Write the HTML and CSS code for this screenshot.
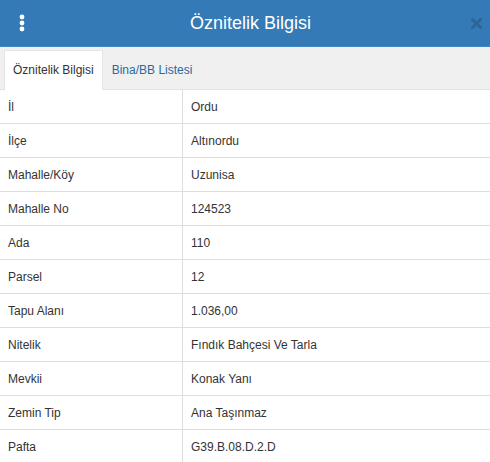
FILE: index.html
```html
<!DOCTYPE html>
<html lang="tr">
<head>
  <meta charset="UTF-8">
  <title>Öznitelik Bilgisi</title>
  <link rel="stylesheet" href="styles.css">
</head>
<body>
  <div class="panel">
    <div class="panel-header">
      <span class="menu-btn">
        <svg width="6" height="18" viewBox="0 0 6 18"><circle cx="3" cy="3" r="2.4" fill="#fff"/><circle cx="3" cy="9" r="2.4" fill="#fff"/><circle cx="3" cy="15" r="2.4" fill="#fff"/></svg>
      </span>
      <h1>Öznitelik Bilgisi</h1>
      <span class="close-btn">
        <svg width="11" height="11" viewBox="0 0 11 11"><path d="M1.5 1.5 L9.5 9.5 M9.5 1.5 L1.5 9.5" stroke="#2c5f8d" stroke-width="3" stroke-linecap="round"/></svg>
      </span>
    </div>
    <ul class="tabs">
      <li class="active">Öznitelik Bilgisi</li>
      <li>Bina/BB Listesi</li>
    </ul>
    <table class="attr-table">
      <tr><td>İl</td><td>Ordu</td></tr>
      <tr><td>İlçe</td><td>Altınordu</td></tr>
      <tr><td>Mahalle/Köy</td><td>Uzunisa</td></tr>
      <tr><td>Mahalle No</td><td>124523</td></tr>
      <tr><td>Ada</td><td>110</td></tr>
      <tr><td>Parsel</td><td>12</td></tr>
      <tr><td>Tapu Alanı</td><td>1.036,00</td></tr>
      <tr><td>Nitelik</td><td>Fındık Bahçesi Ve Tarla</td></tr>
      <tr><td>Mevkii</td><td>Konak Yanı</td></tr>
      <tr><td>Zemin Tip</td><td>Ana Taşınmaz</td></tr>
      <tr><td>Pafta</td><td>G39.B.08.D.2.D</td></tr>
    </table>
  </div>
</body>
</html>
```

FILE: styles.css
```css
body {
  margin: 0;
  font-family: "Liberation Sans", Arial, sans-serif;
  background-color: #fff;
  color: #333;
  overflow: hidden;
}
.panel-header {
  height: 46px;
  background-color: #337ab7;
  display: flex;
  align-items: center;
  padding: 0 8px 0 19px;
  border-bottom: 1px solid #3f86c4;
}
.menu-btn {
  width: 24px;
  display: flex;
  align-items: center;
}
.panel-header h1 {
  flex: 1;
  margin: 0;
  text-align: center;
  color: #fff;
  font-size: 18px;
  font-weight: normal;
}
.close-btn {
  width: 24px;
  display: flex;
  justify-content: flex-end;
  opacity: 0.75;
}
.tabs {
  list-style: none;
  margin: 0;
  padding: 3px 0 0 4px;
  height: 39px;
  display: flex;
  background-color: #f0f0f0;
  border-bottom: 1px solid #e2e2e2;
}
.tabs li {
  padding: 0 9px;
  line-height: 40px;
  font-size: 12px;
  color: #2a6aa3;
}
.tabs li.active {
  background-color: #fff;
  color: #333;
  border: 1px solid #e6e6e6;
  border-bottom: none;
  line-height: 39px;
  margin-bottom: -1px;
  padding: 0 8px;
}
.attr-table {
  width: 100%;
  border-collapse: collapse;
  font-size: 12px;
}
.attr-table td {
  height: 33px;
  padding: 0 8px;
  border-bottom: 1px solid #dedede;
}
.attr-table td:first-child {
  width: 166px;
  border-right: 1px solid #dedede;
}
```
